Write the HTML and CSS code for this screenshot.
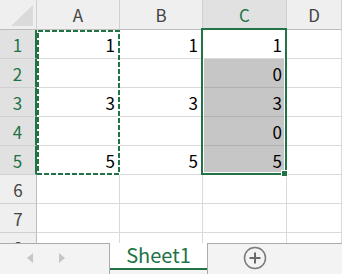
FILE: index.html
```html
<!DOCTYPE html>
<html lang="ja">
<head>
  <meta charset="UTF-8" />
  <title>Sheet1 - Excel</title>
  <link rel="stylesheet" href="styles.css">
</head>
<body>

  <div class="sheet">
    <div class="grid">
      <div class="hdr corner"></div>
      <div class="hdr">A</div>
      <div class="hdr">B</div>
      <div class="hdr on">C</div>
      <div class="hdr">D</div>

      <div class="rh on">1</div>
      <div class="cell">1</div>
      <div class="cell">1</div>
      <div class="cell">1</div>
      <div class="cell"></div>

      <div class="rh on">2</div>
      <div class="cell"></div>
      <div class="cell"></div>
      <div class="cell fill">0</div>
      <div class="cell"></div>

      <div class="rh on">3</div>
      <div class="cell">3</div>
      <div class="cell">3</div>
      <div class="cell fill">3</div>
      <div class="cell"></div>

      <div class="rh on">4</div>
      <div class="cell"></div>
      <div class="cell"></div>
      <div class="cell fill">0</div>
      <div class="cell"></div>

      <div class="rh on">5</div>
      <div class="cell">5</div>
      <div class="cell">5</div>
      <div class="cell fill">5</div>
      <div class="cell"></div>

      <div class="rh">6</div>
      <div class="cell"></div>
      <div class="cell"></div>
      <div class="cell"></div>
      <div class="cell"></div>

      <div class="rh">7</div>
      <div class="cell"></div>
      <div class="cell"></div>
      <div class="cell"></div>
      <div class="cell"></div>

      <div class="rh">8</div>
      <div class="cell"></div>
      <div class="cell"></div>
      <div class="cell"></div>
      <div class="cell"></div>
    </div>

    <!-- copy marquee around A1:A5 -->
    <svg class="marquee" width="83" height="145">
      <rect x="1" y="1" width="81" height="143" fill="none" stroke="#fff" stroke-width="2"/>
      <rect x="1" y="1" width="81" height="143" fill="none" stroke="#217346" stroke-width="2" stroke-dasharray="5 2"/>
    </svg>

    <!-- selection C1:C5 -->
    <div class="selection">
      <div class="handle"></div>
    </div>
  </div>

  <div class="tabs">
    <div class="nav">
      <svg width="8" height="10"><polygon points="7,0 7,10 1,5" fill="#c6c6c6"/></svg>
      <svg width="8" height="10"><polygon points="1,0 1,10 7,5" fill="#c6c6c6"/></svg>
    </div>
    <div class="tab">Sheet1</div>
    <div class="rest">
      <svg class="add" width="24" height="24" viewBox="0 0 24 24">
        <circle cx="12" cy="12" r="10.5" fill="none" stroke="#7a7a7a" stroke-width="1.5"/>
        <path d="M12 6.5v11M6.5 12h11" stroke="#6a6a6a" stroke-width="2"/>
      </svg>
    </div>
  </div>

</body>
</html>
```

FILE: styles.css
```css
* {
  box-sizing: border-box;
}
body {
  margin: 0;
  width: 342px;
  height: 274px;
  overflow: hidden;
  background: #ffffff;
  font-family: "Noto Sans CJK JP", "Noto Sans", sans-serif;
  display: flex;
  flex-direction: column;
}
.sheet {
  position: relative;
  height: 243px;
  overflow: hidden;
}
.grid {
  display: grid;
  grid-template-columns: 37px 83px 83px 84px 1fr;
  grid-template-rows: 30px repeat(8, 29px);
}
.grid > div {
  border-right: 1px solid #dadada;
  border-bottom: 1px solid #dadada;
  display: flex;
  align-items: center;
  font-size: 17px;
  line-height: 1;
}
.hdr {
  background: #efefef;
  justify-content: center;
  color: #444;
  border-right-color: #d0d0d0 !important;
  border-bottom-color: #bdbdbd !important;
}
.hdr.on {
  background: #e1e1e1;
  color: #217346;
}
.corner {
  position: relative;
}
.corner::after {
  content: "";
  position: absolute;
  left: 11px;
  top: 5px;
  width: 22px;
  height: 21px;
  background: #dadada;
  clip-path: polygon(100% 0, 100% 100%, 0 100%);
}
.rh {
  background: #efefef;
  justify-content: center;
  color: #444;
  border-bottom-color: #d0d0d0 !important;
  border-right-color: #bdbdbd !important;
}
.rh.on {
  background: #e1e1e1;
  color: #217346;
  border-right: 2px solid #217346 !important;
}
.cell {
  justify-content: flex-end;
  padding-right: 4px;
  color: #000;
}
.cell.fill {
  background: #c6c6c6;
  border-bottom-color: #b0b0b0 !important;
}
.marquee {
  position: absolute;
  left: 37px;
  top: 30px;
}
.selection {
  position: absolute;
  left: 201px;
  top: 28px;
  width: 86px;
  height: 147px;
  border: 2px solid #217346;
  box-shadow: inset 0 0 0 1px #ffffff;
}
.handle {
  position: absolute;
  left: 78px;
  top: 140px;
  width: 7px;
  height: 7px;
  background: #217346;
  border: 1px solid #ffffff;
}
.tabs {
  height: 31px;
  display: flex;
  background: #f3f3f3;
}
.nav {
  width: 110px;
  border-top: 1px solid #ababab;
  border-right: 1px solid #ababab;
  display: flex;
  align-items: center;
  gap: 24px;
  padding-left: 26px;
  padding-bottom: 2px;
}
.tab {
  width: 97px;
  height: 27px;
  background: #ffffff;
  border-bottom: 2px solid #217346;
  color: #217346;
  font-size: 20px;
  display: flex;
  align-items: center;
  justify-content: center;
  padding-bottom: 2px;
}
.rest {
  flex: 1;
  border-top: 1px solid #ababab;
  border-left: 1px solid #ababab;
  display: flex;
  align-items: center;
  padding-left: 35px;
  padding-bottom: 2px;
}
```
